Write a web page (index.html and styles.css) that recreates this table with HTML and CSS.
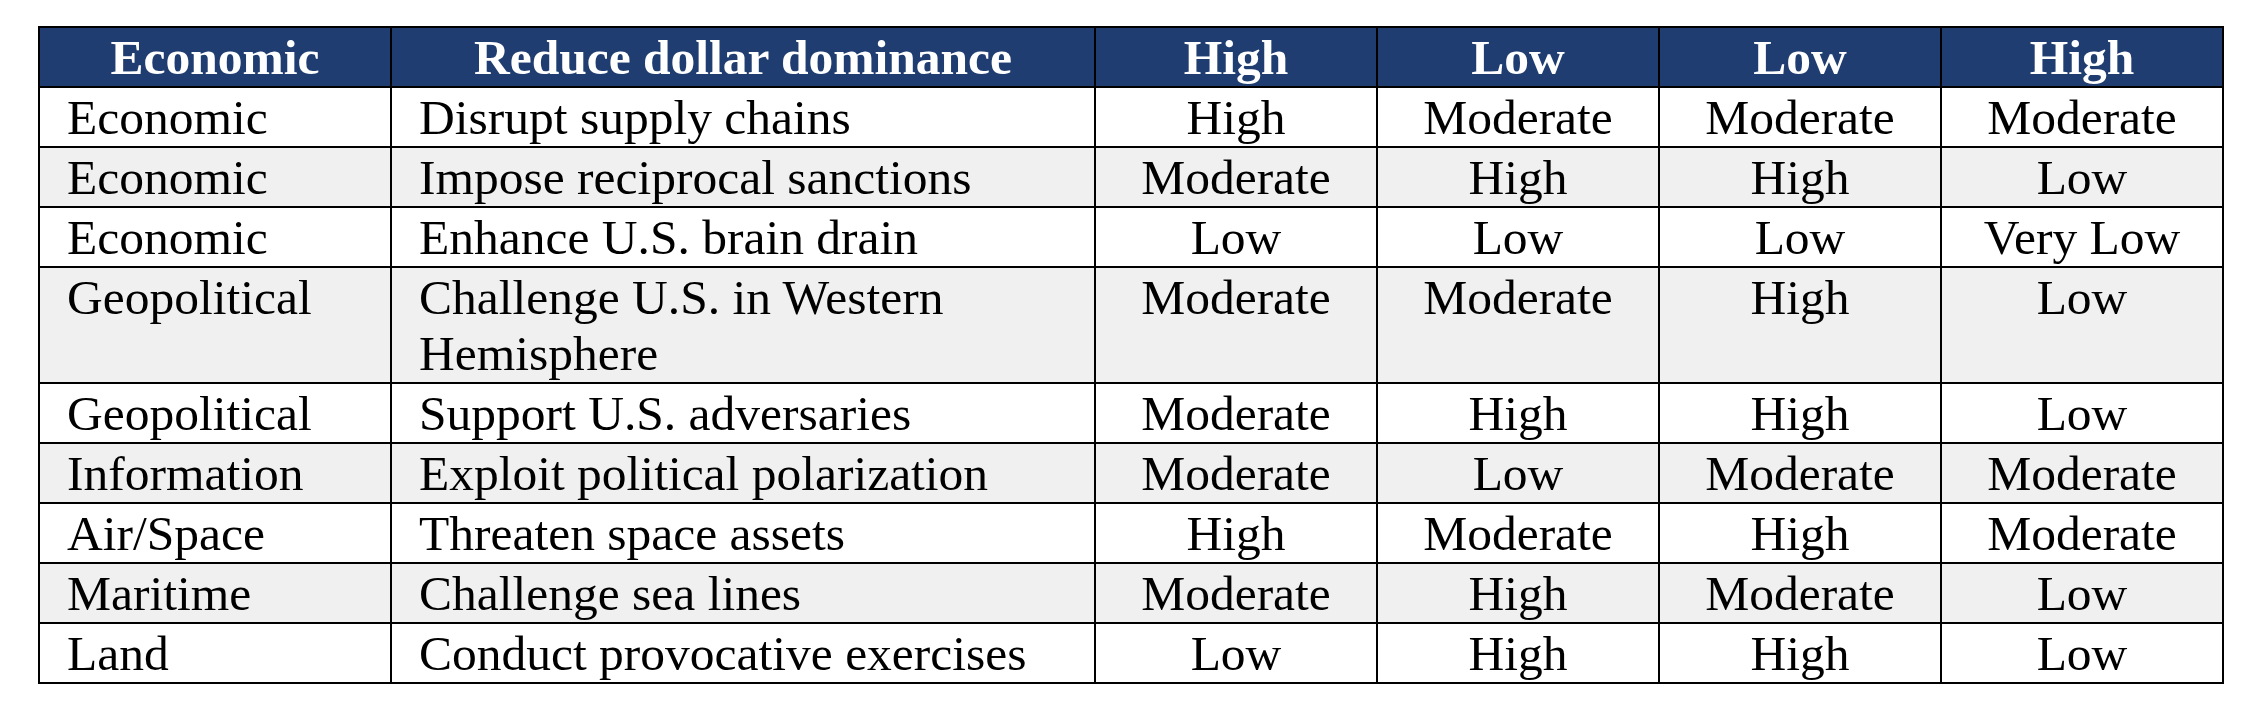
FILE: index.html
```html
<!DOCTYPE html>
<html lang="en">
<head>
<meta charset="utf-8">
<title>Options assessment</title>
<link rel="stylesheet" href="styles.css">
</head>
<body>
<table class="grid">
  <colgroup>
    <col class="c-domain">
    <col class="c-action">
    <col class="c-val">
    <col class="c-val">
    <col class="c-val">
    <col class="c-val">
  </colgroup>
  <thead>
    <tr class="head">
      <th>Economic</th>
      <th>Reduce dollar dominance</th>
      <th>High</th>
      <th>Low</th>
      <th>Low</th>
      <th>High</th>
    </tr>
  </thead>
  <tbody>
    <tr><td class="txt">Economic</td><td class="txt">Disrupt supply chains</td><td>High</td><td>Moderate</td><td>Moderate</td><td>Moderate</td></tr>
    <tr class="alt"><td class="txt">Economic</td><td class="txt">Impose reciprocal sanctions</td><td>Moderate</td><td>High</td><td>High</td><td>Low</td></tr>
    <tr><td class="txt">Economic</td><td class="txt">Enhance U.S. brain drain</td><td>Low</td><td>Low</td><td>Low</td><td>Very Low</td></tr>
    <tr class="alt"><td class="txt">Geopolitical</td><td class="txt">Challenge U.S. in Western<br>Hemisphere</td><td>Moderate</td><td>Moderate</td><td>High</td><td>Low</td></tr>
    <tr><td class="txt">Geopolitical</td><td class="txt">Support U.S. adversaries</td><td>Moderate</td><td>High</td><td>High</td><td>Low</td></tr>
    <tr class="alt"><td class="txt">Information</td><td class="txt">Exploit political polarization</td><td>Moderate</td><td>Low</td><td>Moderate</td><td>Moderate</td></tr>
    <tr><td class="txt">Air/Space</td><td class="txt">Threaten space assets</td><td>High</td><td>Moderate</td><td>High</td><td>Moderate</td></tr>
    <tr class="alt"><td class="txt">Maritime</td><td class="txt">Challenge sea lines</td><td>Moderate</td><td>High</td><td>Moderate</td><td>Low</td></tr>
    <tr><td class="txt">Land</td><td class="txt">Conduct provocative exercises</td><td>Low</td><td>High</td><td>High</td><td>Low</td></tr>
  </tbody>
</table>
</body>
</html>
```

FILE: styles.css
```css
html, body {
  margin: 0;
  padding: 0;
  background: #ffffff;
}

body {
  padding: 26px 0 0 38px;
  font-family: "Liberation Serif", "Times New Roman", serif;
  color: #000000;
}

.grid {
  border-collapse: collapse;
  table-layout: fixed;
  width: 2185px;
  font-size: 49.5px;
  line-height: 56px;
}

.c-domain { width: 352px; }
.c-action { width: 704px; }
.c-val { width: 282px; }

.grid th,
.grid td {
  border: 2px solid #000000;
  padding: 2px 4px 0 4px;
  text-align: center;
  vertical-align: top;
  white-space: nowrap;
}

.grid td.txt {
  text-align: left;
  padding-left: 27px;
}

.head th {
  background: #1f3d70;
  color: #ffffff;
  font-weight: bold;
}

.alt td {
  background: #f0f0f0;
}
```
